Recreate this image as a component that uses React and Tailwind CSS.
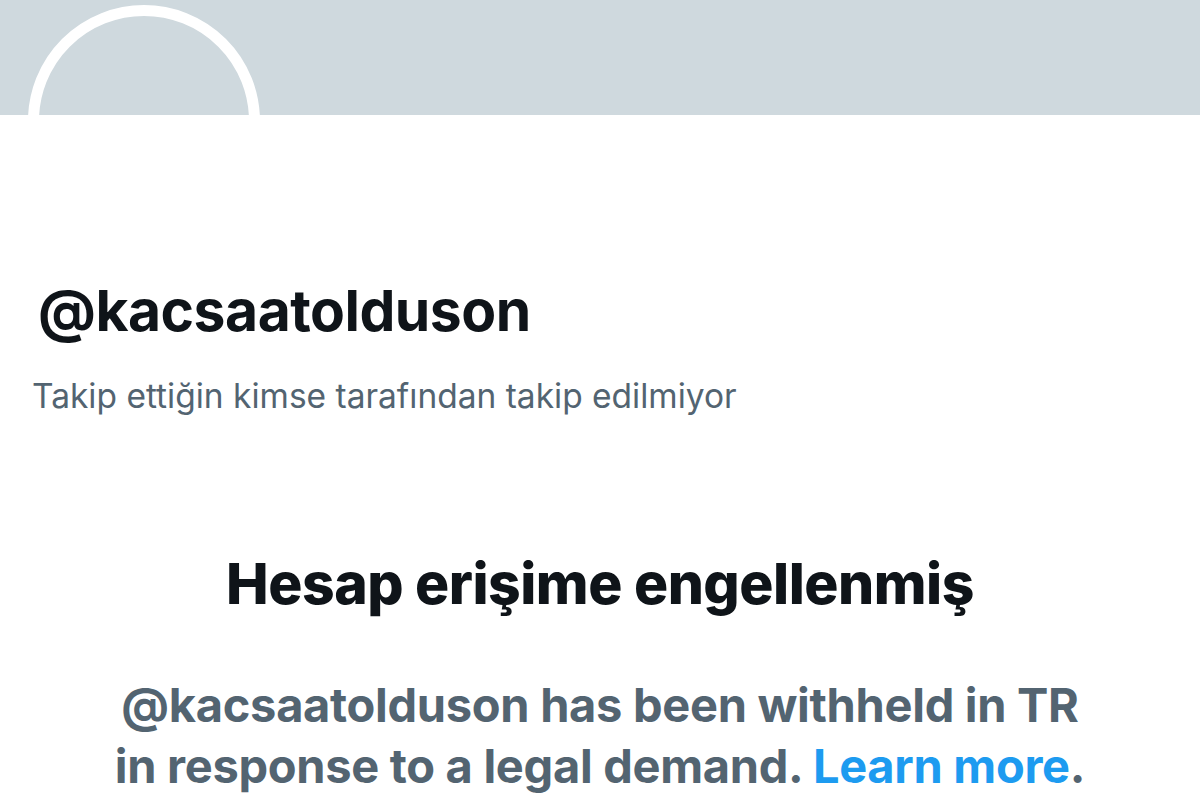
export default function App() {
  const font = { fontFamily: 'Inter, "Noto Sans", sans-serif' };
  return (
    <div className="w-[1200px] h-[806px] bg-white overflow-hidden" style={font}>
      <div className="relative h-[115px] bg-[#cfd9de] overflow-hidden">
        <div className="absolute left-[28px] top-[5px] w-[232px] h-[232px] rounded-full border-[11px] border-white bg-[#cfd9de]" />
      </div>
      <div className="pt-[166px] pl-[38px]">
        <div className="text-[57px] leading-[60px] font-bold text-[#0f1419] tracking-[-0.5px]">@kacsaatolduson</div>
        <div className="mt-[35px] -ml-[6px] text-[33.5px] leading-[40px] text-[#536471]">Takip ettiğin kimse tarafından takip edilmiyor</div>
      </div>
      <div className="mt-[138px] flex flex-col items-center text-center">
        <div className="text-[57px] leading-[60px] font-extrabold text-[#0f1419] tracking-[-0.5px]">Hesap erişime engellenmiş</div>
        <div className="mt-[60px] text-[47px] leading-[61px] font-bold text-[#536471] tracking-[-0.3px]">
          @kacsaatolduson has been withheld in TR
          <br />
          in response to a legal demand. <span className="text-[#1d9bf0]">Learn more</span>.
        </div>
      </div>
    </div>
  );
}
